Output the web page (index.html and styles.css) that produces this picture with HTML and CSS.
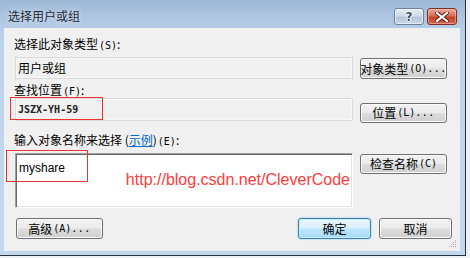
FILE: index.html
```html
<!DOCTYPE html>
<html>
<head>
<meta charset="utf-8">
<link rel="stylesheet" href="styles.css">
</head>
<body>
<div class="window">
  <div class="titlebar">
    <span class="title">选择用户或组</span>
    <div class="caption-btns">
      <div class="cap help"><span class="q">?</span></div>
      <div class="cap close">
        <svg width="14" height="10" viewBox="0 0 14 10">
          <path d="M2 1 L12 9 M12 1 L2 9" stroke="#5a1a10" stroke-width="4" stroke-linecap="square"/>
          <path d="M2 1 L12 9 M12 1 L2 9" stroke="#ffffff" stroke-width="2.2" stroke-linecap="square"/>
        </svg>
      </div>
    </div>
  </div>
  <div class="client">
    <div class="label l1">选择此对象类型<span class="acc">(S)</span>:</div>
    <div class="row r1">
      <div class="field">用户或组</div>
      <div class="btn">对象类型<span class="acc">(O)</span><span class="dots">...</span></div>
    </div>
    <div class="label l2">查找位置<span class="acc">(F)</span>:</div>
    <div class="row r2">
      <div class="field mono">JSZX-YH-59</div>
      <div class="btn btn-low">位置<span class="acc">(L)</span><span class="dots">...</span></div>
      <div class="mark mark1"></div>
    </div>
    <div class="label l3">输入对象名称来选择 (<a class="link">示例</a>)<span class="acc">(E)</span>:</div>
    <div class="row r3">
      <div class="textarea"><span class="typed">myshare</span><span class="url">http://blog.csdn.net/CleverCode</span></div>
      <div class="btn btn-check">检查名称<span class="acc">(C)</span></div>
      <div class="mark mark2"></div>
    </div>
    <div class="bottom">
      <div class="btn">高级<span class="acc">(A)</span><span class="dots">...</span></div>
      <div class="spacer"></div>
      <div class="btn btn-sm btn-default">确定</div>
      <div class="btn btn-sm">取消</div>
    </div>
    <svg class="grip" width="8" height="8" viewBox="0 0 8 8">
      <rect x="6" y="0" width="1" height="1" fill="#b0b0b0"/>
      <rect x="4" y="2" width="1" height="1" fill="#b0b0b0"/>
      <rect x="6" y="2" width="1" height="1" fill="#b0b0b0"/>
      <rect x="2" y="4" width="1" height="1" fill="#b0b0b0"/>
      <rect x="4" y="4" width="1" height="1" fill="#b0b0b0"/>
      <rect x="6" y="4" width="1" height="1" fill="#b0b0b0"/>
      <rect x="0" y="6" width="1" height="1" fill="#b0b0b0"/>
      <rect x="2" y="6" width="1" height="1" fill="#b0b0b0"/>
      <rect x="4" y="6" width="1" height="1" fill="#b0b0b0"/>
      <rect x="6" y="6" width="1" height="1" fill="#b0b0b0"/>
    </svg>
  </div>
</div>
</body>
</html>
```
FILE: styles.css
```css
* { box-sizing: border-box; }
html, body { margin: 0; padding: 0; }
body {
  width: 470px;
  height: 258px;
  background: #eef0f2;
  font-family: "Noto Sans CJK SC", "Liberation Sans", sans-serif;
  font-size: 12px;
  color: #000;
  overflow: hidden;
}
.window {
  width: 466px;
  height: 256px;
  background: linear-gradient(180deg, #9db7d5 0px, #aec6e1 18px, #bcd3eb 40px, #c2d8ee 100%);
  border-right: 1px solid #27323d;
  border-bottom: 1px solid #27323d;
  padding: 0 5px 4px 4px;
  display: flex;
  flex-direction: column;
}
.titlebar {
  height: 28px;
  display: flex;
  align-items: flex-start;
  margin-right: -5px;
  padding-right: 8px;
}
.title {
  margin-left: 4px;
  margin-top: 8px;
  font-size: 12px;
  line-height: 16px;
  color: #1e2a38;
  text-shadow: 0 0 6px rgba(255,255,255,0.8);
}
.caption-btns {
  margin-left: auto;
  margin-top: 8px;
  display: flex;
  gap: 3px;
}
.cap {
  width: 30px;
  height: 17px;
  border-radius: 3px;
  display: flex;
  align-items: center;
  justify-content: center;
}
.help {
  border: 1px solid #6f8299;
  background: linear-gradient(180deg, #e4ecf5 0%, #cfdbe9 45%, #b7c8dc 55%, #c7d6e8 100%);
  box-shadow: inset 0 0 0 1px rgba(255,255,255,0.55);
}
.q {
  font-family: "DejaVu Sans", sans-serif;
  font-weight: bold;
  font-size: 12px;
  line-height: 12px;
  color: #3d4f66;
  text-shadow: 1px 0 #fff, -1px 0 #fff, 0 1px #fff, 0 -1px #fff;
}
.close {
  border: 1px solid #7e2f22;
  background: linear-gradient(180deg, #e9a898 0%, #d86f58 45%, #c3432b 55%, #d4664c 100%);
  box-shadow: inset 0 0 0 1px rgba(255,220,210,0.45);
}
.client {
  flex: 1;
  position: relative;
  background: #f0f0f0;
  padding: 9px 0 0 10px;
  display: flex;
  flex-direction: column;
}
.label {
  height: 14px;
  line-height: 14px;
  white-space: nowrap;
}
.acc {
  font-family: "DejaVu Sans Mono", monospace;
  font-size: 10px;
  margin-left: 1px;
}
.dots {
  font-family: "DejaVu Sans Mono", monospace;
  font-size: 10px;
  letter-spacing: 0.5px;
}
.l2 { margin-top: 4px; }
.l3 { margin-top: 12px; }
.link { color: #0066cc; text-decoration: underline; }
.row {
  position: relative;
  display: flex;
  align-items: flex-start;
  gap: 7px;
  margin-left: 1px;
}
.r1 { margin-top: 6px; height: 22px; }
.r2 { margin-top: 1px; height: 23px; }
.r3 { margin-top: 6px; height: 55px; }
.field {
  width: 338px;
  height: 100%;
  border: 1px solid #dadada;
  background: #f0f0f0;
  box-shadow: inset 0 0 0 1px #f7f7f7;
  padding: 0 2px;
  line-height: 20px;
  white-space: nowrap;
}
.mono {
  font-family: "DejaVu Sans Mono", monospace;
  font-size: 10px;
  font-weight: bold;
  line-height: 21px;
  color: #222;
}
.btn {
  width: 87px;
  height: 21px;
  border: 1px solid #707070;
  border-radius: 3px;
  background: linear-gradient(180deg, #f2f2f2 0%, #ebebeb 48%, #dddddd 52%, #cfcfcf 100%);
  box-shadow: inset 0 0 0 1px #fbfbfb;
  display: flex;
  align-items: center;
  justify-content: center;
  line-height: 14px;
  white-space: nowrap;
}
.r1 .btn { margin-top: 1px; }
.btn-low { margin-top: 5px; height: 20px; }
.btn-check { margin-top: 1px; height: 20px; }
.textarea {
  position: relative;
  width: 338px;
  height: 100%;
  background: #fff;
  border: 1px solid;
  border-color: #a0a0a0 #ffffff #ffffff #a0a0a0;
  box-shadow: inset 1px 1px 0 #696969, inset -1px -1px 0 #e3e3e3;
  padding: 4px 3px;
}
.typed {
  font-family: "Liberation Sans", sans-serif;
  font-size: 12px;
  line-height: 14px;
}
.url {
  position: absolute;
  right: 2px;
  top: 17px;
  font-family: "Liberation Sans", sans-serif;
  font-size: 16px;
  line-height: 18px;
  color: #ff3b3b;
  white-space: nowrap;
}
.mark {
  position: absolute;
  border: 1.5px solid #ef3333;
  pointer-events: none;
}
.mark1 { left: -5px; top: -1px; width: 93px; height: 23px; }
.mark2 { left: -9px; top: -3px; width: 82px; height: 32px; }
.bottom {
  margin-top: 10px;
  display: flex;
  gap: 8px;
  margin-left: 2px;
  width: 436px;
}
.spacer { flex: 1; }
.btn-sm { width: 73px; }
.btn-default {
  border-color: #3c7fb1;
  background: linear-gradient(180deg, #eaf6fd 0%, #d9f0fc 48%, #bee6fd 52%, #a7d9f5 100%);
  box-shadow: inset 0 0 0 1px #c8ecfc, 0 0 2px #6fc6f0;
}
.grip {
  position: absolute;
  right: 3px;
  bottom: 3px;
}
```
